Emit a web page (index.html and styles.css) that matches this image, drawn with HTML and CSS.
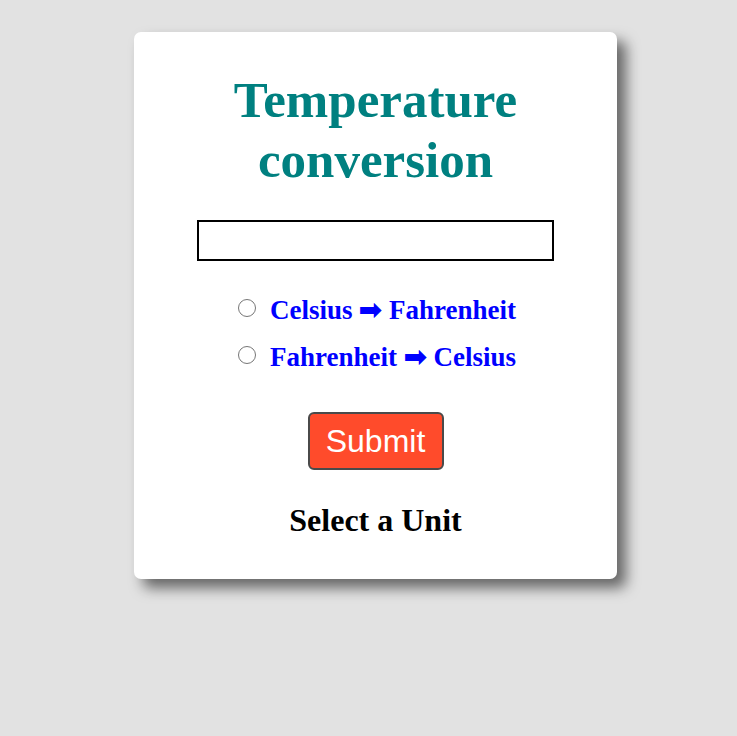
FILE: index.html
```html
<!DOCTYPE html>
<html>
<head>
<meta charset="utf-8">
<link rel="stylesheet" href="styles.css">
</head>
<body>
<div class="card">
  <h1 class="title">Temperature conversion</h1>
  <input class="value" type="text">
  <div class="options">
    <label class="option"><input type="radio" name="unit" class="radio"><span>Celsius ➡ Fahrenheit</span></label>
    <label class="option"><input type="radio" name="unit" class="radio"><span>Fahrenheit ➡ Celsius</span></label>
  </div>
  <button class="submit">Submit</button>
  <div class="result">Select a Unit</div>
</div>
</body>
</html>
```
FILE: styles.css
```css
html, body {
  margin: 0;
  padding: 0;
  background: #e2e2e2;
  font-family: "Liberation Serif", "Times New Roman", serif;
}
body {
  padding: 32px 0 0 134px;
  min-height: 100vh;
  box-sizing: border-box;
}
.card {
  width: 483px;
  height: 547px;
  box-sizing: border-box;
  background: #fff;
  border-radius: 7px;
  box-shadow: 9px 9px 14px rgba(0,0,0,0.55);
  display: flex;
  flex-direction: column;
  align-items: center;
  padding-top: 38px;
}
.title {
  margin: 0;
  width: 340px;
  text-align: center;
  color: #008080;
  font-size: 51px;
  line-height: 60px;
  font-weight: bold;
}
.value {
  margin-top: 30px;
  width: 357px;
  height: 41px;
  box-sizing: border-box;
  border: 2px solid #000;
  outline: none;
  padding: 0 6px;
}
.options {
  margin-top: 34px;
  display: flex;
  flex-direction: column;
  gap: 16px;
  margin-left: 3px;
}
.option {
  display: flex;
  align-items: center;
  color: #0000ff;
  font-weight: bold;
  font-size: 27px;
  line-height: 31px;
}
.radio {
  appearance: none;
  -webkit-appearance: none;
  width: 18px;
  height: 18px;
  box-sizing: border-box;
  border: 1.6px solid #767676;
  border-radius: 50%;
  margin: -5px 14px 0 0;
  background: #fff;
}
.submit {
  margin-top: 39px;
  width: 136px;
  height: 58px;
  background: #ff4b2b;
  border: 2px solid #4a4a4a;
  border-radius: 6px;
  color: #fff;
  font-family: "Liberation Sans", Arial, sans-serif;
  font-size: 32px;
  padding: 0;
}
.result {
  margin-top: 32px;
  font-weight: bold;
  font-size: 32px;
  color: #000;
}
```
